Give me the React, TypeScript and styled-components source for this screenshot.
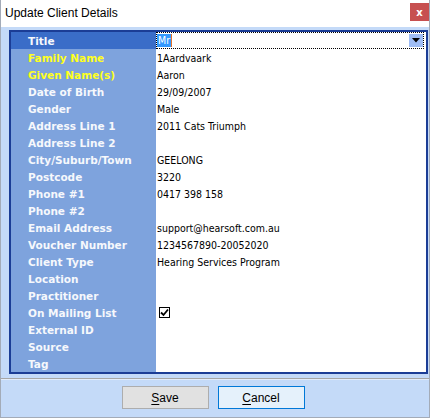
import React from 'react';
import styled, { createGlobalStyle } from 'styled-components';

const GlobalStyle = createGlobalStyle`
  html, body {
    margin: 0;
    padding: 0;
    background: #ffffff;
  }
  * {
    box-sizing: border-box;
  }
`;

const Window = styled.div`
  width: 430px;
  height: 418px;
  display: flex;
  flex-direction: column;
  border: 1px solid #a3abb8;
  border-top: none;
  background: #c4daf8;
  font-family: "Liberation Sans", Arial, sans-serif;
`;

const TitleBar = styled.div`
  height: 27px;
  flex-shrink: 0;
  background: #ffffff;
  display: flex;
  align-items: flex-start;
  justify-content: space-between;
  padding: 6px 0 0 4px;
  font-size: 12px;
  color: #000;
`;

const CloseButton = styled.div`
  width: 19px;
  height: 18px;
  margin-top: -3px;
  background: #c75050;
  color: #fff;
  font-family: "DejaVu Sans", sans-serif;
  font-weight: bold;
  font-size: 10px;
  display: flex;
  align-items: center;
  justify-content: center;
`;

const Body = styled.div`
  flex: 1;
  display: flex;
  flex-direction: column;
  padding: 3px 1px 0 8px;
`;

const Grid = styled.div`
  border: 2px solid #1b3d96;
  background: #ffffff;
  display: grid;
  grid-template-columns: 145px 1fr;
  grid-auto-rows: 17px;
`;

const Label = styled.div<{ $tone: 'normal' | 'required' | 'active' }>`
  background: ${({ $tone }) => ($tone === 'active' ? '#3a6dc8' : '#7ea3dd')};
  color: ${({ $tone }) => ($tone === 'required' ? '#ffff1e' : '#f6f8fc')};
  font-family: "DejaVu Sans", Tahoma, sans-serif;
  font-weight: bold;
  font-size: 10.5px;
  padding-left: 17px;
  display: flex;
  align-items: center;
  white-space: nowrap;
`;

const Value = styled.div`
  font-family: "DejaVu Sans Condensed", "Liberation Sans", sans-serif;
  font-size: 10.5px;
  color: #000;
  padding-left: 1px;
  display: flex;
  align-items: center;
  white-space: nowrap;
`;

const ComboCell = styled.div`
  margin-right: 2px;
  border: 1px dotted #000;
  display: flex;
  align-items: center;
  justify-content: space-between;
  font-family: "DejaVu Sans Condensed", "Liberation Sans", sans-serif;
  font-size: 10.5px;
`;

const Selected = styled.span`
  background: #3399ff;
  color: #fff;
  padding: 0 1px;
  line-height: 13px;
  border-right: 1px solid #e8742a;
`;

const DropButton = styled.div`
  width: 14px;
  height: 13px;
  background: #9fbdf5;
  display: flex;
  align-items: center;
  justify-content: center;
`;

const CheckBox = styled.div`
  width: 11px;
  height: 11px;
  border: 1px solid #000;
  background: #fff;
  margin-left: 2px;
  display: flex;
  align-items: center;
  justify-content: center;
`;

const Separator = styled.div`
  margin-top: 4px;
  margin-right: -1px;
  margin-left: -8px;
  border-top: 1px solid #a6a6a6;
  border-bottom: 1px solid #e2ecfa;
`;

const ButtonRow = styled.div`
  display: flex;
  justify-content: center;
  gap: 9px;
  margin-top: 6px;
  padding-right: 11px;
`;

const Button = styled.div<{ $focused?: boolean }>`
  width: 87px;
  height: 23px;
  border: 1px solid ${({ $focused }) => ($focused ? '#0078d7' : '#adadad')};
  background: ${({ $focused }) => ($focused ? '#e5f1fb' : '#e1e1e1')};
  font-size: 12px;
  color: #000;
  display: flex;
  align-items: center;
  justify-content: center;

  u {
    text-decoration: underline;
    text-underline-offset: 2px;
  }
`;

type Row = {
  label: string;
  value?: string;
  tone?: 'normal' | 'required';
  check?: boolean;
};

const rows: Row[] = [
  { label: 'Family Name', value: '1Aardvaark', tone: 'required' },
  { label: 'Given Name(s)', value: 'Aaron', tone: 'required' },
  { label: 'Date of Birth', value: '29/09/2007' },
  { label: 'Gender', value: 'Male' },
  { label: 'Address Line 1', value: '2011 Cats Triumph' },
  { label: 'Address Line 2' },
  { label: 'City/Suburb/Town', value: 'GEELONG' },
  { label: 'Postcode', value: '3220' },
  { label: 'Phone #1', value: '0417 398 158' },
  { label: 'Phone #2' },
  { label: 'Email Address', value: 'support@hearsoft.com.au' },
  { label: 'Voucher Number', value: '1234567890-20052020' },
  { label: 'Client Type', value: 'Hearing Services Program' },
  { label: 'Location' },
  { label: 'Practitioner' },
  { label: 'On Mailing List', check: true },
  { label: 'External ID' },
  { label: 'Source' },
  { label: 'Tag' },
];

const App: React.FC = () => {
  return (
    <>
      <GlobalStyle />
      <Window>
        <TitleBar>
          <span>Update Client Details</span>
          <CloseButton>x</CloseButton>
        </TitleBar>
        <Body>
          <Grid>
            <Label $tone="active">Title</Label>
            <ComboCell>
              <Selected>Mr</Selected>
              <DropButton>
                <svg width="8" height="5" viewBox="0 0 8 5">
                  <path d="M0 0h8L4 4.5z" fill="#000" />
                </svg>
              </DropButton>
            </ComboCell>
            {rows.map(row => (
              <React.Fragment key={row.label}>
                <Label $tone={row.tone || 'normal'}>{row.label}</Label>
                <Value>
                  {row.check ? (
                    <CheckBox>
                      <svg width="9" height="9" viewBox="0 0 9 9">
                        <path d="M1 4.5l2.5 2.5L8 1.5" fill="none" stroke="#000" strokeWidth="1.8" />
                      </svg>
                    </CheckBox>
                  ) : (
                    row.value
                  )}
                </Value>
              </React.Fragment>
            ))}
          </Grid>
          <Separator />
          <ButtonRow>
            <Button><span><u>S</u>ave</span></Button>
            <Button $focused><span><u>C</u>ancel</span></Button>
          </ButtonRow>
        </Body>
      </Window>
    </>
  );
};

export default App;
